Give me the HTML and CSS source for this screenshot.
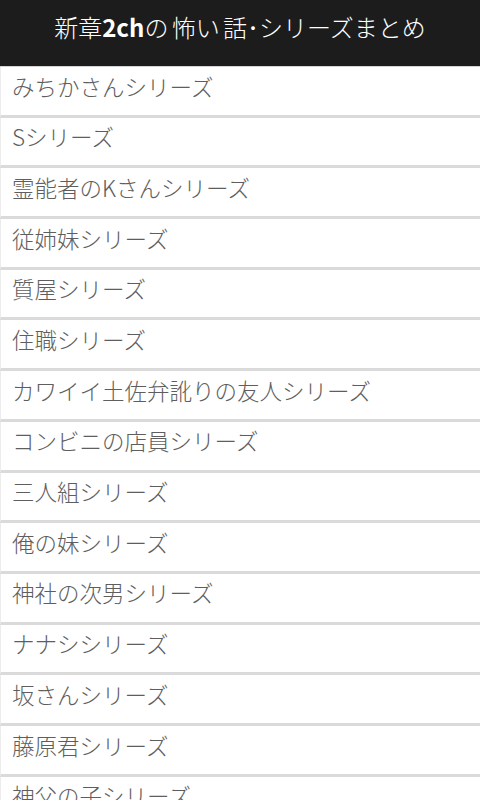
FILE: index.html
```html
<!DOCTYPE html>
<html lang="ja">
<head>
<meta charset="utf-8">
<link rel="stylesheet" href="styles.css">
</head>
<body>
<header class="bar"><h1 class="title">新章<b class="strong">2ch</b>の 怖い 話･シリーズまとめ</h1></header>
<ul class="list">
<li class="item">みちかさんシリーズ</li>
<li class="item">Sシリーズ</li>
<li class="item">霊能者のKさんシリーズ</li>
<li class="item">従姉妹シリーズ</li>
<li class="item">質屋シリーズ</li>
<li class="item">住職シリーズ</li>
<li class="item">カワイイ土佐弁訛りの友人シリーズ</li>
<li class="item">コンビニの店員シリーズ</li>
<li class="item">三人組シリーズ</li>
<li class="item">俺の妹シリーズ</li>
<li class="item">神社の次男シリーズ</li>
<li class="item">ナナシシリーズ</li>
<li class="item">坂さんシリーズ</li>
<li class="item">藤原君シリーズ</li>
<li class="item">神父の子シリーズ</li>
</ul>
</body>
</html>
```
FILE: styles.css
```css
html, body { margin: 0; padding: 0; background: #fff; }
body { width: 480px; height: 800px; overflow: hidden; font-family: "Noto Sans CJK JP", "Liberation Sans", sans-serif; }
.bar { height: 66px; background: #1c1c1c; display: flex; align-items: center; justify-content: center; }
.title { margin: 0; color: #fff; font-size: 24px; font-weight: 300; letter-spacing: 0; padding-bottom: 14px; word-spacing: -2px; }
.strong { font-weight: 700; }
.list { list-style: none; margin: 0; padding: 0; border-top: 1px solid #d4d4d4; }
.item { height: 37.7px; box-sizing: content-box; border-bottom: 3px solid #dadada; border-left: 1px solid #ececec; display: flex; align-items: center; padding-left: 11px; padding-bottom: 10px; font-size: 22.5px; font-weight: 300; color: #5e5e5e; line-height: 1; }
```
